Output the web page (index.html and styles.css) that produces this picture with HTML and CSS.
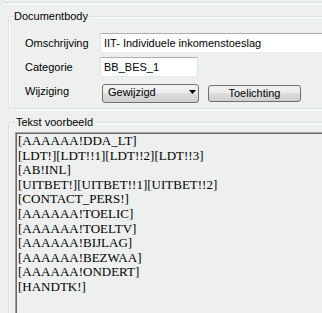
FILE: index.html
```html
<!DOCTYPE html>
<html>
<head>
<meta charset="utf-8">
<link rel="stylesheet" href="styles.css">
</head>
<body>
<div class="screen">
  <div class="top-frame"></div>

  <div class="group doc">
    <span class="legend legend-doc">Documentbody</span>
    <div class="row row1">
      <span class="lbl">Omschrijving</span>
      <div class="textbox wide">IIT- Individuele inkomenstoeslag</div>
    </div>
    <div class="row row2">
      <span class="lbl">Categorie</span>
      <div class="textbox short">BB_BES_1</div>
    </div>
    <div class="row row3">
      <span class="lbl">Wijziging</span>
      <div class="combo">
        <span class="combo-text">Gewijzigd</span>
        <svg class="arrow" width="7" height="4" viewBox="0 0 7 4"><path d="M0 0H7L3.5 4Z" fill="#000"/></svg>
      </div>
      <div class="button">Toelichting</div>
    </div>
  </div>

  <div class="group preview-group">
    <span class="legend legend-preview">Tekst voorbeeld</span>
    <div class="preview">[AAAAAA!DDA_LT]
[LDT!][LDT!!1][LDT!!2][LDT!!3]
[AB!INL]
[UITBET!][UITBET!!1][UITBET!!2]
[CONTACT_PERS!]
[AAAAAA!TOELIC]
[AAAAAA!TOELTV]
[AAAAAA!BIJLAG]
[AAAAAA!BEZWAA]
[AAAAAA!ONDERT]
[HANDTK!]</div>
  </div>
</div>
</body>
</html>
```
FILE: styles.css
```css
html, body {
  margin: 0;
  padding: 0;
}

body {
  background: #eef0ef;
  font-family: "Liberation Sans", Arial, sans-serif;
  font-size: 11px;
  line-height: 13px;
  color: #000;
  overflow: hidden;
}

.screen {
  width: 322px;
  height: 313px;
  overflow: hidden;
}

.top-frame {
  margin-left: 3px;
  width: 400px;
  height: 2px;
  border-left: 1px solid #d5dfe5;
  border-bottom: 1px solid #d5dfe5;
  border-bottom-left-radius: 3px;
  box-shadow: 0 1px 0 #ffffff;
}

.group {
  position: relative;
  margin-left: 8px;
  width: 400px;
  border: 1px solid #d5dfe5;
  border-radius: 3px;
  box-shadow: inset 1px 1px 0 #ffffff, 1px 1px 0 #ffffff;
}

.doc {
  margin-top: 13px;
  padding: 16px 0 5px 16px;
}

.legend {
  position: absolute;
  top: -7px;
  padding: 0 1px;
  background: #eef0ef;
  white-space: nowrap;
}

.legend-doc {
  left: 4px;
}

.legend-preview {
  left: 6px;
}

.row {
  display: flex;
}

.row1 {
  height: 20px;
  align-items: center;
}

.row2 {
  height: 20px;
  margin-top: 4px;
  align-items: center;
}

.row3 {
  height: 19px;
  margin-top: 7px;
  align-items: flex-start;
}

.lbl {
  width: 75px;
  flex: none;
  white-space: nowrap;
}

.row3 .lbl {
  padding-top: 1px;
}

.textbox {
  box-sizing: border-box;
  height: 20px;
  display: flex;
  align-items: center;
  padding-left: 3px;
  background: #ffffff;
  border: 1px solid #e2e3ea;
  border-top-color: #abadb3;
  border-bottom-color: #e3e9ef;
  white-space: nowrap;
}

.wide {
  width: 240px;
}

.short {
  width: 98px;
}

.combo {
  box-sizing: border-box;
  margin-left: 2px;
  width: 97px;
  height: 19px;
  border: 1px solid #707070;
  border-radius: 3px;
  background: linear-gradient(to bottom, #f2f2f2 0%, #ebebeb 50%, #dddddd 50%, #cfcfcf 100%);
  display: flex;
  align-items: flex-start;
  justify-content: space-between;
  padding: 0 2px 0 5px;
}

.combo-text {
  line-height: 13px;
  padding-top: 1px;
}

.arrow {
  margin-top: 5px;
  display: block;
}

.button {
  box-sizing: border-box;
  margin-left: 9px;
  margin-top: 1px;
  width: 93px;
  height: 17px;
  border: 1px solid #707070;
  border-radius: 3px;
  background: linear-gradient(to bottom, #f2f2f2 0%, #ebebeb 50%, #dddddd 50%, #cfcfcf 100%);
  text-align: center;
  line-height: 15px;
}

.preview-group {
  margin-top: 13px;
  height: 400px;
  padding: 9px 0 0 6px;
}

.preview {
  box-sizing: border-box;
  width: 400px;
  height: 400px;
  border-top: 1px solid #a0a0a0;
  border-left: 1px solid #a0a0a0;
  box-shadow: inset 1px 1px 0 #696969;
  padding: 1px 0 0 2px;
  font-family: "Liberation Serif", "Times New Roman", serif;
  font-size: 13px;
  line-height: 14.6px;
  white-space: pre;
}
```
